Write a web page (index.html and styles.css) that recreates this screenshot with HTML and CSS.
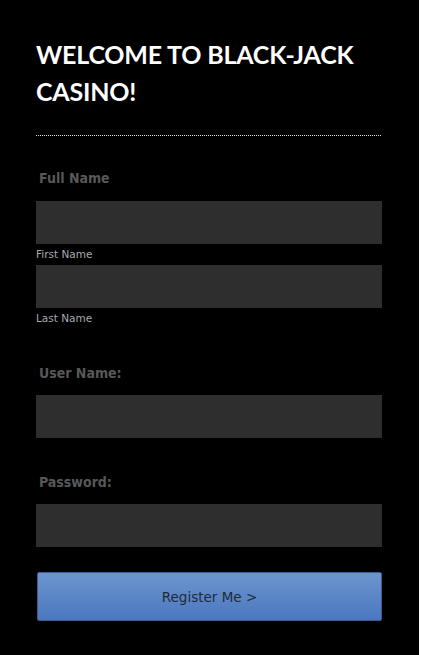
FILE: index.html
```html
<!DOCTYPE html>
<html>
<head>
<meta charset="utf-8">
<link rel="stylesheet" href="styles.css">
</head>
<body>
<div class="page">
  <h1 class="title">WELCOME TO BLACK-JACK CASINO!</h1>
  <hr class="divider">
  <form class="form">
    <div class="group">
      <div class="label label-first">Full Name</div>
      <div class="field"></div>
      <div class="sub">First Name</div>
      <div class="field"></div>
      <div class="sub">Last Name</div>
    </div>
    <div class="group">
      <div class="label">User Name:</div>
      <div class="field"></div>
    </div>
    <div class="group">
      <div class="label">Password:</div>
      <div class="field"></div>
    </div>
    <div class="button">Register Me &gt;</div>
  </form>
</div>
</body>
</html>
```

FILE: styles.css
```css
html { background: #fff; }
body { margin: 0; }
.page {
  width: 419px;
  min-height: 655px;
  box-sizing: border-box;
  background: #000;
  padding: 36px 37px 0 36px;
}
.title {
  margin: 0;
  font-family: Lato, "DejaVu Sans", sans-serif;
  font-weight: 700;
  font-size: 25px;
  line-height: 37px;
  color: #fff;
  letter-spacing: -0.2px;
}
.divider {
  margin: 25px 1px 0 0;
  border: 0;
  border-top: 1px dotted #ddd;
  height: 0;
}
.form { display: flex; flex-direction: column; }
.group { display: flex; flex-direction: column; }
.label {
  font-family: "DejaVu Sans Condensed", "DejaVu Sans", sans-serif;
  font-weight: 700;
  font-size: 14px;
  color: #585858;
  padding-left: 3px;
  margin-top: 35px;
  line-height: 18px;
  margin-bottom: 13px;
}
.label-first { margin-top: 33px; margin-bottom: 14px; }
.field {
  height: 43px;
  background: #2e2e2e;
}
.sub {
  font-family: "DejaVu Sans", sans-serif;
  font-size: 10.5px;
  color: #a4acb4;
  line-height: 21px;
}
.button {
  margin-top: 25px;
  margin-left: 1px;
  height: 47px;
  border: 1px solid #3a5e94;
  border-radius: 2px;
  background: linear-gradient(#6c95cd, #4a78bf);
  color: #1f2a3a;
  font-family: "DejaVu Sans", sans-serif;
  font-size: 13.5px;
  display: flex;
  align-items: center;
  justify-content: center;
}
```
